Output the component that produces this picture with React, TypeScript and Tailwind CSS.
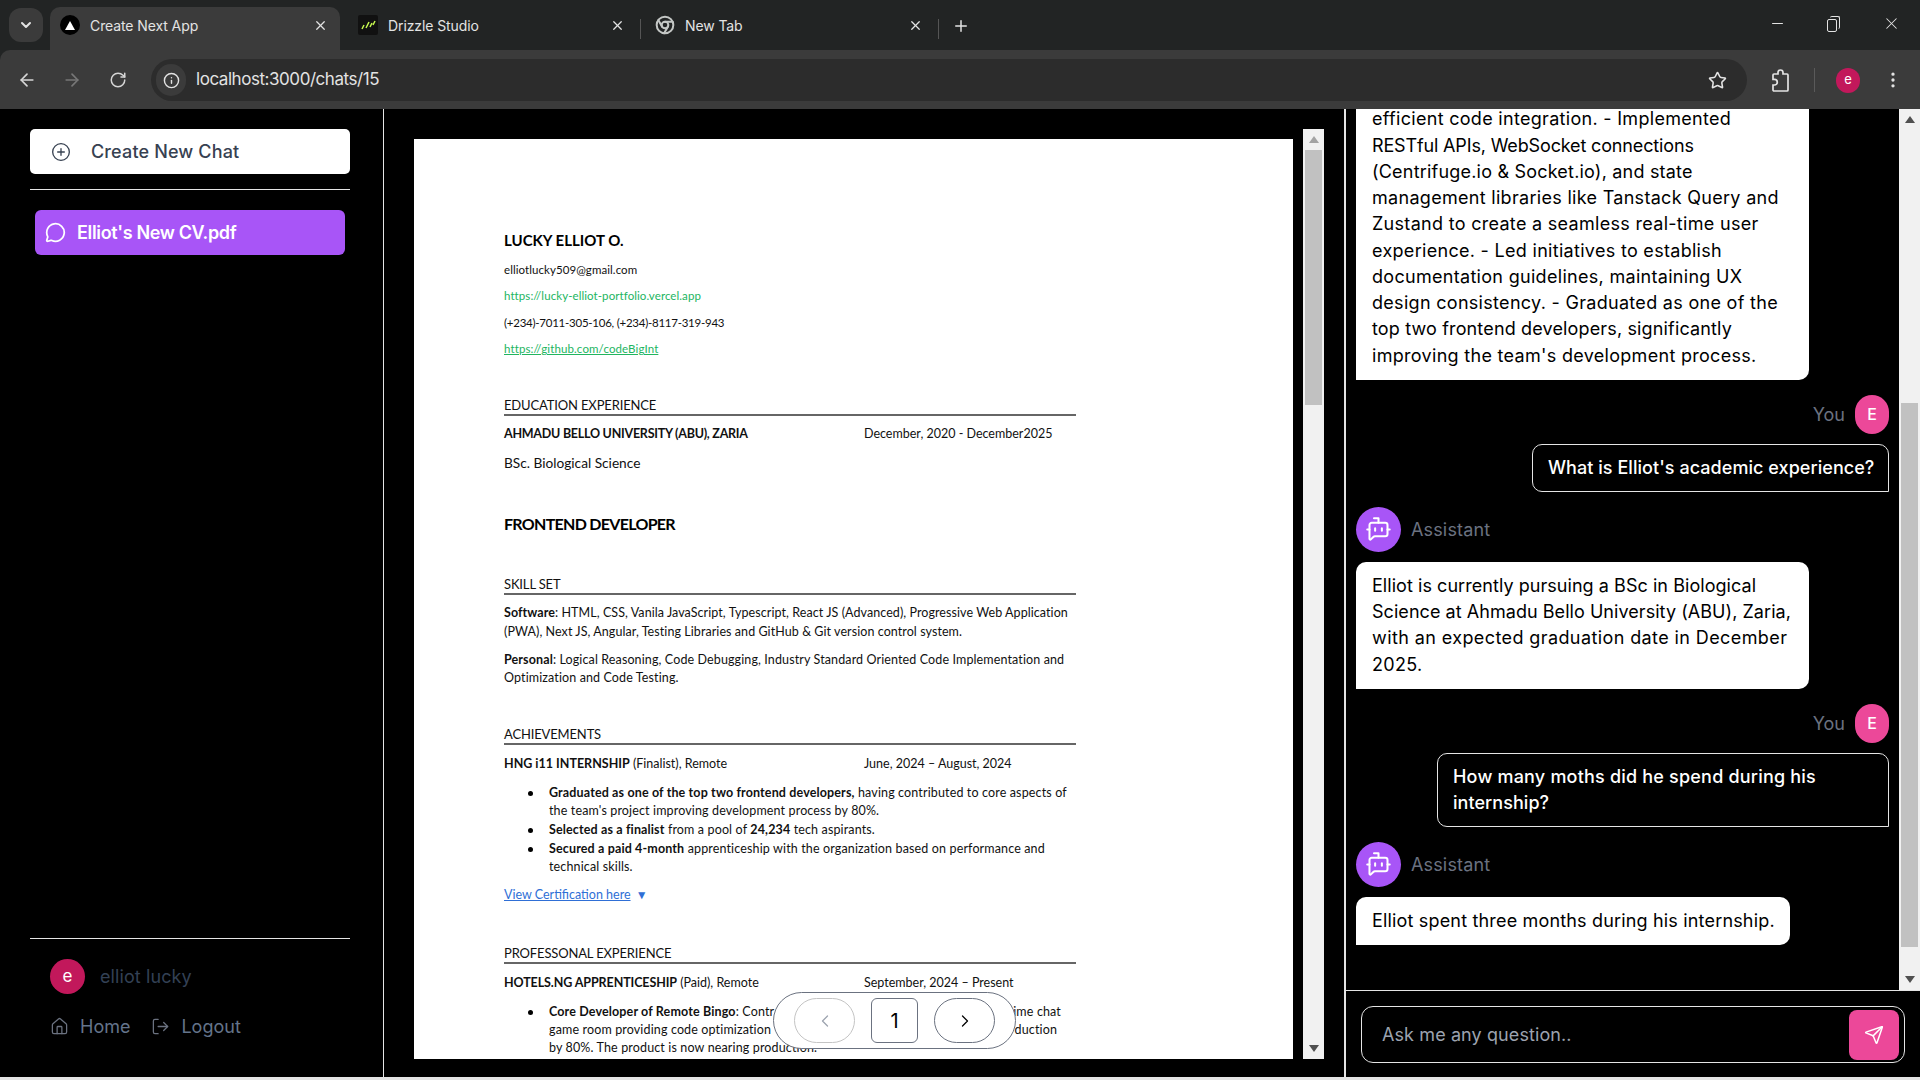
import {
  ArrowLeft,
  ArrowRight,
  BotMessageSquare,
  ChevronDown,
  ChevronLeft,
  ChevronRight,
  Chrome,
  CirclePlus,
  EllipsisVertical,
  House,
  Info,
  LogOut,
  MessageCircle,
  Minus,
  Plus,
  RotateCw,
  Send,
  Star,
  X,
} from "lucide-react";
import type { ReactNode } from "react";

const uiFont = "font-['Inter','Noto_Sans',sans-serif]";
const docFont = "font-['Lato','Noto_Sans',sans-serif]";

function Tab({
  icon,
  title,
  active,
  className,
}: {
  icon: ReactNode;
  title: string;
  active?: boolean;
  className: string;
}) {
  return (
    <div
      className={`flex h-[43px] items-center rounded-t-[10px] pb-[7px] ${className} ${
        active ? "bg-[#3b3b3b]" : ""
      }`}
    >
      <div className="flex w-[20px] justify-center">{icon}</div>
      <span className="ml-[10px] flex-1 text-[14px] tracking-[-0.1px] text-[#e3e3e3]">{title}</span>
      <X size={15} className="text-[#e3e3e3]" />
    </div>
  );
}

function TabStrip() {
  return (
    <div className="flex h-[50px] items-end bg-[#222424] pl-[9px]">
      <div className="mb-[8px] flex h-[34px] w-[34px] items-center justify-center rounded-[12px] bg-[#3b3b3b]">
        <ChevronDown size={16} strokeWidth={3} className="text-[#e3e3e3]" />
      </div>
      <div className="ml-[7px] flex items-end">
        <Tab
          active
          className="w-[290px] pl-[10px] pr-[12px]"
          title="Create Next App"
          icon={
            <div className="flex h-[20px] w-[20px] items-center justify-center rounded-full bg-black">
              <div className="h-0 w-0 border-x-[5px] border-b-[9px] border-x-transparent border-b-white" />
            </div>
          }
        />
        <Tab
          className="w-[300px] pl-[18px] pr-[15px]"
          title="Drizzle Studio"
          icon={
            <svg width="20" height="20" viewBox="0 0 20 20" className="rounded-[2px] bg-[#111]">
              <path d="M4 14l2-4M8 13l3-6M12 12l2-4M15 10l2-4" stroke="#c5f74f" strokeWidth="1.5" />
            </svg>
          }
        />
        <div className="mb-[11px] h-[20px] w-px bg-[#555]" />
        <Tab
          className="w-[297px] pl-[14px] pr-[15px]"
          title="New Tab"
          icon={<Chrome size={20} strokeWidth={2.4} className="text-[#c4c7c5]" />}
        />
        <div className="mb-[11px] h-[20px] w-px bg-[#555]" />
        <Plus size={18} className="mb-[15px] ml-[13px] text-[#e3e3e3]" />
      </div>
      <div className="mb-[17px] ml-auto flex items-center pr-[19px] text-[#e3e3e3]">
        <Minus size={17} strokeWidth={1.5} />
        <div className="relative ml-[41px] h-[16px] w-[13px]">
          <div className="absolute bottom-0 left-0 h-[13px] w-[10px] rounded-[2px] border border-[#e3e3e3]" />
          <div className="absolute right-0 top-0 h-[13px] w-[10px] rounded-[2px] border-r border-t border-[#e3e3e3]" />
        </div>
        <X size={19} strokeWidth={1.3} className="ml-[42px]" />
      </div>
    </div>
  );
}

function Toolbar() {
  return (
    <div className="flex h-[59px] items-center rounded-tl-[10px] bg-[#3b3b3b] pt-px">
      <ArrowLeft size={20} className="ml-[17px] text-[#d6d6d6]" />
      <ArrowRight size={20} className="ml-[25px] text-[#777]" />
      <RotateCw size={18} className="ml-[27px] text-[#d6d6d6]" />
      <div className="ml-[24px] flex h-[42px] w-[1596px] items-center rounded-full bg-[#2c2c2c] pl-[5px]">
        <div className="flex h-[32px] w-[30px] items-center justify-center rounded-full bg-[#3b3b3b]">
          <Info size={17} className="text-[#e3e3e3]" />
        </div>
        <span className="ml-[10px] text-[17px] tracking-[-0.45px] text-[#e3e3e3]">
          localhost:3000/chats/15
        </span>
        <Star size={19} className="ml-auto mr-[20px] text-[#e3e3e3]" />
      </div>
      <svg
        width="20"
        height="25"
        viewBox="0 0 20 25"
        fill="none"
        stroke="#e3e3e3"
        strokeWidth="1.7"
        className="ml-[24px]"
      >
        <path d="M3 6h4V4.5a2.5 2.5 0 0 1 5 0V6h4a1 1 0 0 1 1 1v15a1 1 0 0 1-1 1H3a1 1 0 0 1-1-1v-5h1.5a2.8 2.8 0 0 0 0-5.6H2V7a1 1 0 0 1 1-1z" />
      </svg>
      <div className="ml-[23px] h-[24px] w-px bg-[#5a5a5a]" />
      <div className="ml-[21px] flex h-[25px] w-[24px] items-center justify-center rounded-full bg-[#c2185b] text-[13px] text-white">
        e
      </div>
      <EllipsisVertical size={20} className="ml-[23px] text-[#e3e3e3]" />
    </div>
  );
}

function Sidebar() {
  return (
    <aside className="flex w-[384px] shrink-0 flex-col border-r border-[#e5e5e5] pl-[30px] pr-[33px] pt-[20px]">
      <div className="flex h-[45px] items-center rounded-[5px] bg-white pl-[21px] text-[#374151]">
        <CirclePlus size={20} strokeWidth={1.6} />
        <span className="ml-[20px] text-[18px] font-medium tracking-[0.15px]">Create New Chat</span>
      </div>
      <div className="mt-[15px] h-px bg-[#e5e5e5]" />
      <div className="mx-[5px] mt-[20px] flex h-[45px] items-center rounded-[6px] bg-[#a855f7] pl-[10px] text-white">
        <MessageCircle size={21} />
        <span className="ml-[11px] text-[18px] font-semibold tracking-[-0.35px]">Elliot&apos;s New CV.pdf</span>
      </div>
      <div className="mt-auto h-px bg-[#e5e5e5]" />
      <div className="mt-[20px] flex items-center pl-[20px]">
        <div className="flex h-[35px] w-[35px] items-center justify-center rounded-full bg-[#c2185b] text-[17px] text-white">
          e
        </div>
        <span className="ml-[15px] text-[18px] tracking-[0.1px] text-[#334155]">elliot lucky</span>
      </div>
      <div className="mb-[37px] mt-[19px] flex items-center pl-[20px] text-[18px] text-[#64748b]">
        <House size={19} strokeWidth={1.6} className="text-[#6b7280]" />
        <span className="ml-[11px]">Home</span>
        <LogOut size={19} strokeWidth={1.6} className="ml-[21px] text-[#6b7280]" />
        <span className="ml-[11px]">Logout</span>
      </div>
    </aside>
  );
}

function Line({ mt, className = "", children }: { mt: string; className?: string; children: ReactNode }) {
  return <div className={`h-[18px] whitespace-nowrap leading-[18px] ${mt} ${className}`}>{children}</div>;
}

function Heading({ mt, children }: { mt: string; children: ReactNode }) {
  return (
    <div className={`box-content h-[18px] w-[572px] whitespace-nowrap border-b-2 border-[#666] text-[13px] leading-[18px] tracking-[-0.15px] ${mt}`}>
      {children}
    </div>
  );
}

function Dated({ mt, date, children }: { mt: string; date: string; children: ReactNode }) {
  return (
    <Line mt={mt} className="flex">
      <div className="w-[360px]">{children}</div>
      <div className="tracking-normal">{date}</div>
    </Line>
  );
}

function Bullet({ mt, first, children }: { mt: string; first?: boolean; children: ReactNode }) {
  return (
    <div className={`relative h-[18px] whitespace-nowrap pl-[45px] leading-[18px] tracking-[0.14px] ${mt}`}>
      {first && <span className="absolute left-[24px] top-[7px] h-[5px] w-[5px] rounded-full bg-black" />}
      {children}
    </div>
  );
}

function PdfPage() {
  return (
    <div className={`h-[1000px] w-[879px] bg-white pl-[90px] pt-[92px] text-[12.5px] text-[#111] ${docFont}`}>
      <Line mt="mt-0" className="text-[15px] font-bold text-black">LUCKY ELLIOT O.</Line>
      <Line mt="mt-[12px]" className="text-[11.5px] tracking-[0.07px]">elliotlucky509@gmail.com</Line>
      <Line mt="mt-[8px]" className="text-[11.5px] tracking-[0.08px] text-[#22b55f]">https://lucky-elliot-portfolio.vercel.app</Line>
      <Line mt="mt-[9px]" className="text-[11.5px] tracking-[-0.25px]">(+234)-7011-305-106, (+234)-8117-319-943</Line>
      <Line mt="mt-[8px]" className="text-[11.5px] tracking-[0.12px] text-[#22b55f] underline">https://github.com/codeBigInt</Line>

      <Heading mt="mt-[38px]">EDUCATION EXPERIENCE</Heading>
      <Dated mt="mt-[9px]" date="December, 2020 - December2025">
        <b className="tracking-[-0.25px]">AHMADU BELLO UNIVERSITY (ABU), ZARIA</b>
      </Dated>
      <Line mt="mt-[11px]" className="text-[13.7px]">BSc. Biological Science</Line>
      <Line mt="mt-[43px]" className="text-[16px] font-bold tracking-[-0.7px] text-black">FRONTEND DEVELOPER</Line>

      <Heading mt="mt-[42px]">SKILL SET</Heading>
      <Line mt="mt-[9px]" className="tracking-[0.07px]"><b>Software</b>: HTML, CSS, Vanila JavaScript, Typescript, React JS (Advanced), Progressive Web Application</Line>
      <Line mt="mt-px" className="tracking-[0.07px]">(PWA), Next JS, Angular, Testing Libraries and GitHub &amp; Git version control system.</Line>
      <Line mt="mt-[10px]" className="tracking-[0.12px]"><b>Personal</b>: Logical Reasoning, Code Debugging, Industry Standard Oriented Code Implementation and</Line>
      <Line mt="mt-0" className="tracking-[0.12px]">Optimization and Code Testing.</Line>

      <Heading mt="mt-[38px]">ACHIEVEMENTS</Heading>
      <Dated mt="mt-[10px]" date="June, 2024 – August, 2024">
        <b>HNG i11 INTERNSHIP</b> (Finalist), Remote
      </Dated>
      <Bullet mt="mt-[11px]" first><b>Graduated as one of the top two frontend developers,</b> having contributed to core aspects of</Bullet>
      <Bullet mt="mt-0">the team&apos;s project improving development process by 80%.</Bullet>
      <Bullet mt="mt-px" first><b>Selected as a finalist</b> from a pool of <b>24,234</b> tech aspirants.</Bullet>
      <Bullet mt="mt-px" first><b>Secured a paid 4-month</b> apprenticeship with the organization based on performance and</Bullet>
      <Bullet mt="mt-0">technical skills.</Bullet>
      <Line mt="mt-[10px]" className="text-[#2f6fd6]">
        <span className="underline">View Certification here</span> <span className="ml-[2px] text-[12px]">▼</span>
      </Line>

      <Heading mt="mt-[40px]">PROFESSONAL EXPERIENCE</Heading>
      <Dated mt="mt-[10px]" date="September, 2024 – Present">
        <b className="tracking-[-0.1px]">HOTELS.NG APPRENTICESHIP</b> (Paid), Remote
      </Dated>
      <Bullet mt="mt-[11px]" first>
        <div className="flex w-[512px] justify-between">
          <span><b>Core Developer of Remote Bingo</b>: Contr</span>
          <span>ime chat</span>
        </div>
      </Bullet>
      <Bullet mt="mt-0">
        <div className="flex w-[508px] justify-between">
          <span>game room providing code optimization</span>
          <span>duction</span>
        </div>
      </Bullet>
      <Bullet mt="mt-0">by 80%. The product is now nearing production.</Bullet>
    </div>
  );
}

function Pager() {
  return (
    <div className="absolute left-[359px] top-[863px] flex h-[57px] w-[243px] items-center rounded-full border border-[#6b7280] bg-white pl-[20px]">
      <div className="flex h-[45px] w-[61px] items-center justify-center rounded-full border border-[#c4c4c4] text-[#9ca3af]">
        <ChevronLeft size={20} strokeWidth={1.5} />
      </div>
      <div className={`ml-[16px] flex h-[45px] w-[47px] items-center justify-center rounded-[6px] border border-[#6b7280] text-[20px] text-black ${uiFont}`}>
        1
      </div>
      <div className="ml-[16px] flex h-[45px] w-[61px] items-center justify-center rounded-full border border-[#6b7280] text-black">
        <ChevronRight size={20} strokeWidth={1.5} />
      </div>
    </div>
  );
}

function PdfViewer() {
  return (
    <section className="flex w-[962px] shrink-0 flex-col border-r-2 border-[#e5e5e5] pl-[30px] pt-[20px]">
      <div className="relative flex h-[930px] w-[910px] overflow-hidden">
        <div className="w-[889px] pt-[10px]">
          <PdfPage />
        </div>
        <div className="flex w-[21px] flex-col bg-[#f1f1f1]">
          <div className="flex h-[21px] items-center justify-center text-[#a3a3a3]">
            <div className="h-0 w-0 border-x-[5px] border-b-[7px] border-x-transparent border-b-[#a3a3a3]" />
          </div>
          <div className="mx-[2px] h-[255px] bg-[#c1c1c1]" />
          <div className="mt-auto flex h-[21px] items-center justify-center">
            <div className="h-0 w-0 border-x-[5px] border-t-[7px] border-x-transparent border-t-[#505050]" />
          </div>
        </div>
        <Pager />
      </div>
    </section>
  );
}

function AssistantHead() {
  return (
    <div className="mt-[15px] flex shrink-0 items-center">
      <div className="flex h-[45px] w-[45px] items-center justify-center rounded-full bg-[#a855f7] text-white">
        <BotMessageSquare size={27} strokeWidth={1.8} />
      </div>
      <span className="ml-[10px] text-[18px] tracking-[0.15px] text-[#6b7280]">Assistant</span>
    </div>
  );
}

function UserHead() {
  return (
    <div className="mt-[15px] flex shrink-0 items-center justify-end">
      <span className="mr-[10px] text-[18px] text-[#6b7280]">You</span>
      <div className="flex h-[39px] w-[34px] items-center justify-center rounded-full bg-[#ec4899] text-[16px] font-medium text-white">
        E
      </div>
    </div>
  );
}

function AssistantBubble({ width, mt = "mt-[10px]", children }: { width: string; mt?: string; children: ReactNode }) {
  return (
    <div className={`shrink-0 whitespace-nowrap rounded-[10px] rounded-bl-none bg-white px-[16px] py-[11px] text-[18px] leading-[26.25px] tracking-[0.3px] text-black ${width} ${mt}`}>
      {children}
    </div>
  );
}

function UserBubble({ width, children }: { width: string; children: ReactNode }) {
  return (
    <div className={`ml-auto mt-[10px] shrink-0 whitespace-nowrap rounded-[10px] rounded-br-none border border-[#e5e5e5] px-[15px] py-[10px] text-[18px] font-medium leading-[26px] tracking-[0.05px] text-white ${width}`}>
      {children}
    </div>
  );
}

function ChatPanel() {
  return (
    <section className="flex min-w-0 flex-1 flex-col">
      <div className="flex h-[882px] border-b border-[#e5e5e5]">
        <div className="flex w-[553px] flex-col justify-end overflow-hidden pb-[45px] pl-[10px] pr-[10px]">
          <AssistantBubble width="w-[453px]" mt="mt-0">
            efficient code integration. - Implemented
            <br />
            <span className="tracking-[-0.15px]">RESTful APIs, WebSocket connections</span>
            <br />
            <span className="tracking-[0.2px]">(Centrifuge.io &amp; Socket.io), and state</span>
            <br />
            management libraries like Tanstack Query and
            <br />
            Zustand to create a seamless real-time user
            <br />
            experience. - Led initiatives to establish
            <br />
            documentation guidelines, maintaining UX
            <br />
            design consistency. - Graduated as one of the
            <br />
            <span className="tracking-[0.15px]">top two frontend developers, significantly</span>
            <br />
            improving the team&apos;s development process.
          </AssistantBubble>
          <UserHead />
          <UserBubble width="w-[357px]">What is Elliot&apos;s academic experience?</UserBubble>
          <AssistantHead />
          <AssistantBubble width="w-[453px]">
            <span className="tracking-[0.05px]">Elliot is currently pursuing a BSc in Biological</span>
            <br />
            <span className="tracking-[0.05px]">Science at Ahmadu Bello University (ABU), Zaria,</span>
            <br />
            <span className="tracking-[0.4px]">with an expected graduation date in December</span>
            <br />
            2025.
          </AssistantBubble>
          <UserHead />
          <UserBubble width="w-[452px]">
            <span className="tracking-[0.2px]">How many moths did he spend during his</span>
            <br />
            internship?
          </UserBubble>
          <AssistantHead />
          <AssistantBubble width="w-[434px]">
            <span className="tracking-[0.17px]">Elliot spent three months during his internship.</span>
          </AssistantBubble>
        </div>
        <div className="flex w-[21px] flex-col bg-[#f1f1f1]">
          <div className="flex h-[21px] items-center justify-center">
            <div className="h-0 w-0 border-x-[5px] border-b-[7px] border-x-transparent border-b-[#505050]" />
          </div>
          <div className="mx-[2px] mt-[273px] h-[544px] bg-[#c1c1c1]" />
          <div className="mt-auto flex h-[21px] items-center justify-center">
            <div className="h-0 w-0 border-x-[5px] border-t-[7px] border-x-transparent border-t-[#505050]" />
          </div>
        </div>
      </div>
      <div className="px-[15px] pt-[15px]">
        <div className="flex h-[57px] items-center rounded-[12px] border border-[#e5e5e5] pl-[20px] pr-[5px]">
          <span className="text-[18px] tracking-[0.1px] text-[#9ca3af]">Ask me any question..</span>
          <div className="ml-auto flex h-[50px] w-[50px] items-center justify-center rounded-[8px] bg-[#ec4899] text-white">
            <Send size={20} strokeWidth={1.8} />
          </div>
        </div>
      </div>
    </section>
  );
}

export default function App() {
  return (
    <div className={`flex h-[1080px] w-[1920px] flex-col overflow-hidden bg-[#e4e4e4] ${uiFont}`}>
      <TabStrip />
      <div className="bg-[#222424]">
        <Toolbar />
      </div>
      <main className="flex h-[968px] bg-black">
        <Sidebar />
        <PdfViewer />
        <ChatPanel />
      </main>
    </div>
  );
}
